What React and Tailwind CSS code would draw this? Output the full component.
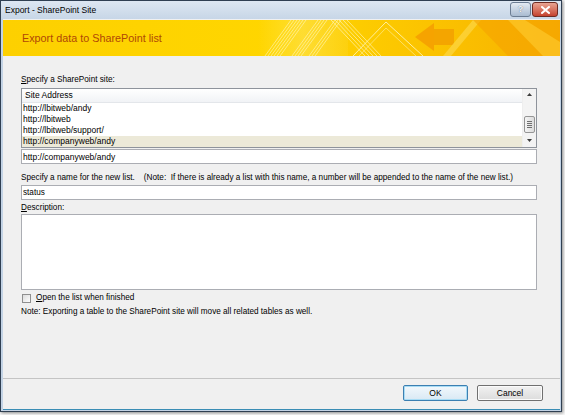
import { useState } from 'react'

const sites = [
  'http://lbitweb/andy',
  'http://lbitweb',
  'http://lbitweb/support/',
  'http://companyweb/andy',
]

// decorative stripes and arrow on the right of the yellow header
function BannerArt() {
  return (
    <svg className="absolute inset-0 w-full h-full" viewBox="0 0 557 36" preserveAspectRatio="none">
      <defs>
        <linearGradient id="fade" x1="0" x2="1" y1="0" y2="0">
          <stop offset="0" stopColor="#fff6b0" stopOpacity="0" />
          <stop offset="0.5" stopColor="#fff6b0" stopOpacity="0.7" />
          <stop offset="1" stopColor="#fff6b0" stopOpacity="0.2" />
        </linearGradient>
      </defs>
      <rect x="255" y="0" width="90" height="36" fill="url(#fade)" opacity="0.4" />
      {/* hatch */}
      {[262, 265, 268, 271, 274, 277, 289, 292, 295, 298, 306, 309, 312].map((x) => (
        <line key={x} x1={x} y1="36" x2={x + 26} y2="0" stroke="#fff6b8" strokeOpacity="0.7" strokeWidth="0.9" />
      ))}
      {/* peaks */}
      {[328, 332, 336, 340, 344].map((x) => (
        <line key={'a' + x} x1={x} y1="0" x2={x + 34} y2="36" stroke="#fff6b8" strokeOpacity="0.75" strokeWidth="0.9" />
      ))}
      <polyline points="350,36 383,2 420,36" fill="none" stroke="#fff6b8" strokeOpacity="0.85" strokeWidth="1" />
      <polyline points="356,36 383,8 413,36" fill="none" stroke="#fff6b8" strokeOpacity="0.6" strokeWidth="0.9" />
      {/* arrow */}
      <polygon points="412,17 431,3 431,31" fill="#f5a000" opacity="0.9" />
      <rect x="431" y="9" width="20" height="16" fill="#f39e00" opacity="0.8" />
      <polygon points="440,36 470,0 478,0 448,36" fill="#fcd23a" opacity="0.85" />
      <polygon points="470,0 557,0 557,36 505,36" fill="#f5a200" opacity="0.6" />
      <polygon points="505,0 540,36 557,36 557,22 522,0" fill="#ffd43a" opacity="0.5" />
    </svg>
  )
}

function Label({ accel, rest }) {
  return (
    <div className="h-[11px] leading-[11px] text-[8.2px] text-black">
      <span className="underline">{accel}</span>
      {rest}
    </div>
  )
}

export default function App() {
  const [selected, setSelected] = useState(3)
  const [url, setUrl] = useState('http://companyweb/andy')
  const [name, setName] = useState('status')
  const [openAfter, setOpenAfter] = useState(false)

  return (
    <div className="w-[565px] h-[415px] bg-[#f7f7f7] font-['Liberation_Sans',Arial,sans-serif]">
      <div className="w-[562px] h-[412px] flex flex-col border border-[#2f3f52] bg-[#c3d3e5] shadow-[1px_1px_3px_rgba(0,0,0,0.45)]">
        {/* title bar */}
        <div className="h-[18px] shrink-0 flex items-start pl-[4px] pr-[3px] bg-gradient-to-b from-[#dde7f2] to-[#c7d6e7]">
          <span className="mt-[4px] text-[8.5px] leading-[11px] text-black">Export - SharePoint Site</span>
          <div className="ml-auto mt-[1px] flex gap-[1px]">
            <div className="w-[21px] h-[15px] flex items-center justify-center rounded-[3px] border border-[#6b7d93] bg-gradient-to-b from-[#e4ebf3] to-[#a9bbd0] text-[9px] font-bold leading-none text-[#f7f9fb] [text-shadow:0_0_1px_#44556a]">
              ?
            </div>
            <div className="w-[26px] h-[15px] flex items-center justify-center rounded-[3px] border border-[#6e2b22] bg-gradient-to-b from-[#e8a493] to-[#c4412e]">
              <svg width="9" height="8" viewBox="0 0 9 8">
                <path d="M1 1 L8 7 M8 1 L1 7" stroke="#ffffff" strokeWidth="2" strokeLinecap="square" />
              </svg>
            </div>
          </div>
        </div>

        {/* client area */}
        <div className="flex-1 ml-[2px] mr-[1px] mb-[1px] flex flex-col bg-[#f0f0f0] border-b border-[#3a8db5]">
          <div className="relative h-[36px] shrink-0 mt-[1px] flex items-center pl-[19px] bg-gradient-to-r from-[#fdd000] via-[#ffd600] to-[#f7b200]">
            <BannerArt />
            <span className="relative text-[10.8px] text-[#b04806]">Export data to SharePoint list</span>
          </div>

          <div className="flex-1 flex flex-col pl-[18px] pr-[23px] pt-[18px]">
            <Label accel="S" rest="pecify a SharePoint site:" />

            {/* site list */}
            <div className="mt-[3px] h-[60px] flex border border-[#8e939b] bg-white">
              <div className="flex-1 flex flex-col">
                <div className="h-[14px] shrink-0 flex items-center pl-[3px] border-b border-[#e3e6ea] bg-gradient-to-b from-white to-[#f1f3f6] text-[8.5px] text-black">
                  Site Address
                </div>
                {sites.map((s, i) => (
                  <div
                    key={s}
                    onClick={() => { setSelected(i); setUrl(s) }}
                    className={`h-[11px] shrink-0 leading-[11px] pl-[1px] text-[8.5px] text-black ${i === selected ? 'bg-[#ece9d8]' : ''}`}
                  >
                    {s}
                  </div>
                ))}
              </div>
              {/* scrollbar */}
              <div className="w-[14px] flex flex-col items-center bg-[#f3f3f3] border-l border-[#eeeeee]">
                <svg className="mt-[4px]" width="5" height="3" viewBox="0 0 5 3"><path d="M0 3 L2.5 0 L5 3 Z" fill="#3c3c3c" /></svg>
                <div className="mt-[20px] w-[11px] h-[17px] flex flex-col items-center justify-center gap-[1px] rounded-[2px] border border-[#959595] bg-gradient-to-r from-[#f4f4f4] to-[#dcdcdc]">
                  <div className="w-[5px] h-px bg-[#6f6f6f]" />
                  <div className="w-[5px] h-px bg-[#6f6f6f]" />
                  <div className="w-[5px] h-px bg-[#6f6f6f]" />
                  <div className="w-[5px] h-px bg-[#6f6f6f]" />
                </div>
                <svg className="mt-auto mb-[5px]" width="5" height="3" viewBox="0 0 5 3"><path d="M0 0 L5 0 L2.5 3 Z" fill="#3c3c3c" /></svg>
              </div>
            </div>

            <input
              value={url}
              onChange={(e) => setUrl(e.target.value)}
              className="mt-[1px] h-[15px] px-[1px] border border-[#abadb3] bg-white text-[8.5px] text-black outline-none"
            />

            <div className="mt-[8px] h-[11px] leading-[11px] text-[8.2px] text-black whitespace-pre">
              {'Specify a name for the new list.    (Note:  If there is already a list with this name, a number will be appended to the name of the new list.)'}
            </div>
            <input
              value={name}
              onChange={(e) => setName(e.target.value)}
              className="mt-[2px] h-[15px] px-[1px] border border-[#abadb3] bg-white text-[8.2px] text-black outline-none"
            />

            <div className="mt-[2px]">
              <Label accel="D" rest="escription:" />
            </div>
            <textarea className="mt-[1px] h-[76px] resize-none border border-[#abadb3] bg-white text-[8.2px] outline-none" />

            <label className="mt-[3px] h-[10px] flex items-center gap-[5px] text-[8.2px] text-black">
              <span
                onClick={() => setOpenAfter(!openAfter)}
                className="ml-[1px] w-[9px] h-[9px] flex items-center justify-center border border-[#8f8f8f] bg-gradient-to-br from-[#dcdcdc] to-[#fdfdfd]"
              >
                {openAfter && <span className="w-[5px] h-[5px] bg-[#4a7ab0]" />}
              </span>
              <span><span className="underline">O</span>pen the list when finished</span>
            </label>

            <div className="mt-[3px] h-[11px] leading-[11px] text-[8.2px] text-black">
              Note: Exporting a table to the SharePoint site will move all related tables as well.
            </div>
          </div>

          {/* footer buttons */}
          <div className="h-[31px] shrink-0 flex justify-end items-start gap-[9px] pt-[6px] pr-[17px] border-t border-[#c4c4c4]">
            <button className="w-[65px] h-[16px] rounded-[2px] border border-[#3c7fb1] bg-gradient-to-b from-[#f2f8fc] to-[#d9e9f4] text-[8.5px] text-black shadow-[inset_0_0_0_1px_#a8dcf5]">
              OK
            </button>
            <button className="w-[66px] h-[16px] rounded-[2px] border border-[#707070] bg-gradient-to-b from-[#f2f2f2] to-[#dcdcdc] text-[8.5px] text-black shadow-[inset_0_0_0_1px_#fbfbfb]">
              Cancel
            </button>
          </div>
        </div>
      </div>
    </div>
  )
}
